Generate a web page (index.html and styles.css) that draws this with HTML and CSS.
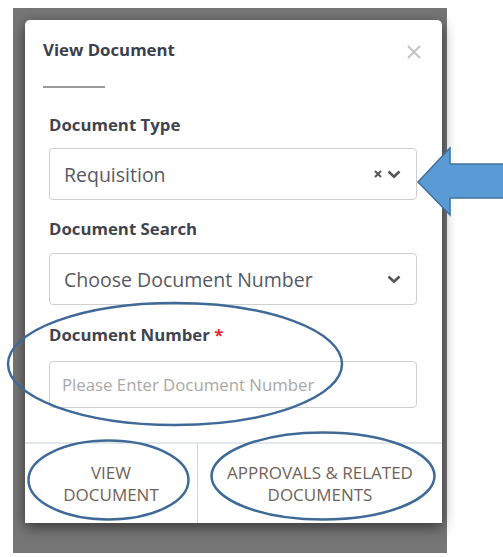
FILE: index.html
```html
<!DOCTYPE html>
<html>
<head>
<meta charset="utf-8">
<link rel="stylesheet" href="styles.css">
</head>
<body>
<div class="page">
  <div class="backdrop">
    <div class="dialog">
      <div class="header">
        <div class="title-row">
          <div class="title">View Document</div>
          <svg class="close" width="14" height="14" viewBox="0 0 14 14"><path d="M1 1 L13 13 M13 1 L1 13" stroke="#c4c4c4" stroke-width="2" fill="none"/></svg>
        </div>
        <div class="underline"></div>
      </div>
      <div class="body">
        <div class="field f1">
          <div class="label">Document Type</div>
          <div class="select">
            <span class="value">Requisition</span>
            <span class="icons">
              <svg width="8" height="8" viewBox="0 0 8 8"><path d="M1 1 L7 7 M7 1 L1 7" stroke="#555" stroke-width="2" fill="none"/></svg>
              <svg width="14" height="9" viewBox="0 0 14 9"><path d="M1.5 1.5 L7 6.8 L12.5 1.5" stroke="#555" stroke-width="2.6" fill="none"/></svg>
            </span>
          </div>
        </div>
        <div class="field f2">
          <div class="label">Document Search</div>
          <div class="select">
            <span class="value">Choose Document Number</span>
            <span class="icons">
              <svg width="14" height="9" viewBox="0 0 14 9"><path d="M1.5 1.5 L7 6.8 L12.5 1.5" stroke="#555" stroke-width="2.6" fill="none"/></svg>
            </span>
          </div>
        </div>
        <div class="field f3">
          <div class="label">Document Number <span class="req">*</span></div>
          <div class="input"><span class="placeholder">Please Enter Document Number</span></div>
        </div>
      </div>
      <div class="footer">
        <div class="btn btn-left">VIEW<br>DOCUMENT</div>
        <div class="btn btn-right">APPROVALS &amp; RELATED<br>DOCUMENTS</div>
      </div>
    </div>
  </div>
  <svg class="annot" width="503" height="557" viewBox="0 0 503 557">
    <ellipse cx="175" cy="364" rx="167" ry="61" fill="none" stroke="#3f6a98" stroke-width="2.5"/>
    <ellipse cx="108.5" cy="480" rx="80" ry="39.5" fill="none" stroke="#3f6a98" stroke-width="2.5"/>
    <ellipse cx="323" cy="476" rx="111.5" ry="43.5" fill="none" stroke="#3f6a98" stroke-width="2.5"/>
    <path d="M418 182 L450 148 L450 164 L506 164 L506 198 L450 198 L450 215 Z" fill="#5b9bd5" stroke="#41719c" stroke-width="1.5"/>
  </svg>
</div>
</body>
</html>
```
FILE: styles.css
```css
html, body {
  margin: 0;
  padding: 0;
  background: #ffffff;
}
.page {
  position: relative;
  width: 503px;
  height: 557px;
  overflow: hidden;
  font-family: "Open Sans", "Liberation Sans", sans-serif;
}
.backdrop {
  position: relative;
  top: 8px;
  margin-left: 13px;
  width: 434px;
  height: 545px;
  box-sizing: border-box;
  padding: 12px 5px 30px 12px;
  background: #767676;
}
.dialog {
  width: 417px;
  height: 503px;
  background: #ffffff;
  border-radius: 5px 5px 0 0;
  box-shadow: 0 4px 14px rgba(0,0,0,0.55);
  display: flex;
  flex-direction: column;
}
.header {
  padding: 20px 21px 0 18px;
}
.title-row {
  display: flex;
  justify-content: space-between;
  align-items: center;
  height: 20px;
}
.title {
  font-size: 16.8px;
  font-weight: 700;
  color: #3b404c;
  line-height: 20px;
}
.close {
  margin-top: 4px;
}
.underline {
  margin-top: 26px;
  width: 62px;
  height: 2px;
  background: #9a9a9a;
}
.body {
  padding: 26px 25px 0 24px;
  flex: 1;
}
.label {
  font-size: 16.8px;
  font-weight: 700;
  color: #3f4450;
  line-height: 22px;
  height: 22px;
}
.req {
  color: #e8262b;
}
.f1 .label { margin-bottom: 12px; }
.f2 { margin-top: 18px; }
.f2 .label { margin-bottom: 13px; }
.f3 { margin-top: 19px; }
.f3 .label { margin-bottom: 15px; }
.select {
  height: 52px;
  box-sizing: border-box;
  border: 1px solid #cfcfcf;
  border-radius: 4px;
  display: flex;
  align-items: center;
  justify-content: space-between;
  padding: 0 15px 0 14px;
}
.value {
  font-size: 19.5px;
  color: #555a63;
}
.icons {
  display: flex;
  align-items: center;
  gap: 5px;
}
.input {
  height: 47px;
  box-sizing: border-box;
  border: 1px solid #cfcfcf;
  border-radius: 4px;
  display: flex;
  align-items: center;
  padding: 0 12px;
}
.placeholder {
  font-size: 16.8px;
  color: #a8a8a8;
}
.footer {
  height: 81px;
  border-top: 2px solid #e3e6ea;
  box-sizing: border-box;
  display: flex;
}
.btn {
  display: flex;
  align-items: center;
  justify-content: center;
  text-align: center;
  font-size: 17px;
  line-height: 22px;
  color: #6f6359;
}
.btn-left {
  width: 172px;
  border-right: 1px solid #d8d8d8;
}
.btn-right {
  flex: 1;
}
.annot {
  position: absolute;
  left: 0;
  top: 0;
}
```
